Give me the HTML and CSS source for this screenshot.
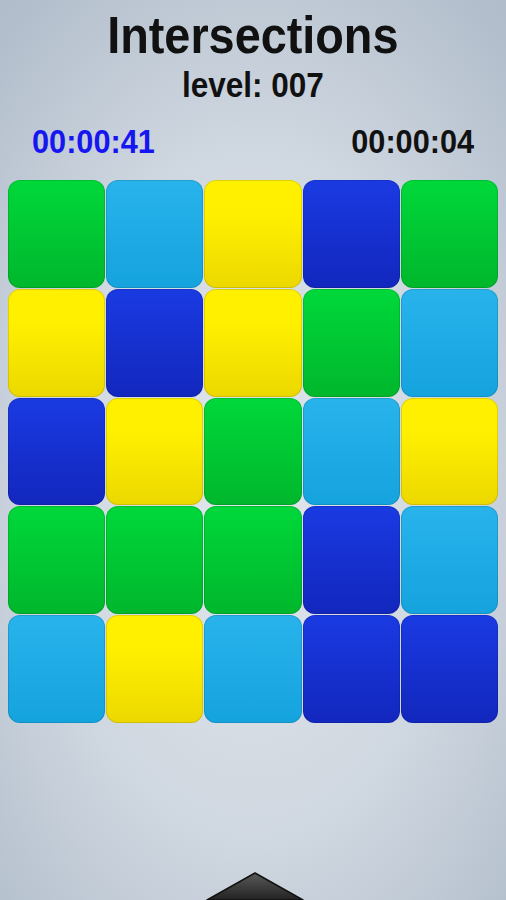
FILE: index.html
```html
<!DOCTYPE html>
<html lang="en">
<head>
  <meta charset="UTF-8">
  <title>Intersections</title>
  <link rel="stylesheet" href="styles.css">
</head>
<body>

  <div class="screen">
    <h1 class="title"><span>Intersections</span></h1>
    <div class="level"><span>level: 007</span></div>

    <div class="timers">
      <span class="timer best">00:00:41</span>
      <span class="timer current">00:00:04</span>
    </div>

    <div class="board">
      <div class="tile green"></div>
      <div class="tile sky"></div>
      <div class="tile yellow"></div>
      <div class="tile navy"></div>
      <div class="tile green"></div>

      <div class="tile yellow"></div>
      <div class="tile navy"></div>
      <div class="tile yellow"></div>
      <div class="tile green"></div>
      <div class="tile sky"></div>

      <div class="tile navy"></div>
      <div class="tile yellow"></div>
      <div class="tile green"></div>
      <div class="tile sky"></div>
      <div class="tile yellow"></div>

      <div class="tile green"></div>
      <div class="tile green"></div>
      <div class="tile green"></div>
      <div class="tile navy"></div>
      <div class="tile sky"></div>

      <div class="tile sky"></div>
      <div class="tile yellow"></div>
      <div class="tile sky"></div>
      <div class="tile navy"></div>
      <div class="tile navy"></div>
    </div>

    <div class="footer">
      <svg class="menu-arrow" width="100" height="28" viewBox="0 0 100 28">
        <defs>
          <linearGradient id="arrowFill" x1="0" y1="0" x2="0" y2="1">
            <stop offset="0" stop-color="#5a5a5a"/>
            <stop offset="1" stop-color="#222"/>
          </linearGradient>
        </defs>
        <polygon points="50,1 98,28 2,28" fill="url(#arrowFill)" stroke="#111" stroke-width="1.5" stroke-linejoin="round"/>
      </svg>
    </div>
  </div>

</body>
</html>
```

FILE: styles.css
```css
html, body {
  margin: 0;
  padding: 0;
  height: 100%;
}
body {
  background: radial-gradient(ellipse 75% 70% at 50% 55%, #e2e7ed 0%, #cfd7e0 55%, #b1bdcb 100%);
  font-family: "Liberation Sans", Arial, sans-serif;
  color: #111;
}
.screen {
  height: 900px;
  display: flex;
  flex-direction: column;
  align-items: center;
  overflow: hidden;
}
.title {
  margin: 5px 0 0;
  font-size: 52px;
  line-height: 60px;
  font-weight: bold;
  white-space: nowrap;
}
.title span,
.level span {
  display: inline-block;
  transform: scaleX(0.9);
}
.level {
  font-size: 35px;
  line-height: 40px;
  font-weight: bold;
  white-space: nowrap;
}
.timers {
  align-self: stretch;
  display: flex;
  justify-content: space-between;
  padding: 17px 32px 0 32px;
}
.timer {
  display: inline-block;
  font-size: 33px;
  line-height: 40px;
  font-weight: bold;
  transform: scaleX(0.93);
  transform-origin: left center;
}
.timer.best {
  color: #1616f0;
}
.timer.current {
  transform-origin: right center;
}
.board {
  margin-top: 18px;
  width: 490px;
  height: 543px;
  display: grid;
  grid-template-columns: repeat(5, 1fr);
  grid-template-rows: repeat(5, 1fr);
  gap: 1px;
}
.tile {
  border-radius: 12px;
  box-shadow: inset 0 0 0 1px rgba(0, 0, 0, 0.12);
}
.green {
  background: linear-gradient(#00d83a, #00b72c);
}
.sky {
  background: linear-gradient(#28b3eb, #15a3de);
}
.yellow {
  background: linear-gradient(#fff000 30%, #ecd800);
}
.navy {
  background: linear-gradient(#1a3ae2, #1227bd);
}
.footer {
  margin-top: auto;
  line-height: 0;
}
.menu-arrow {
  display: block;
  margin-left: 4px;
}
```
